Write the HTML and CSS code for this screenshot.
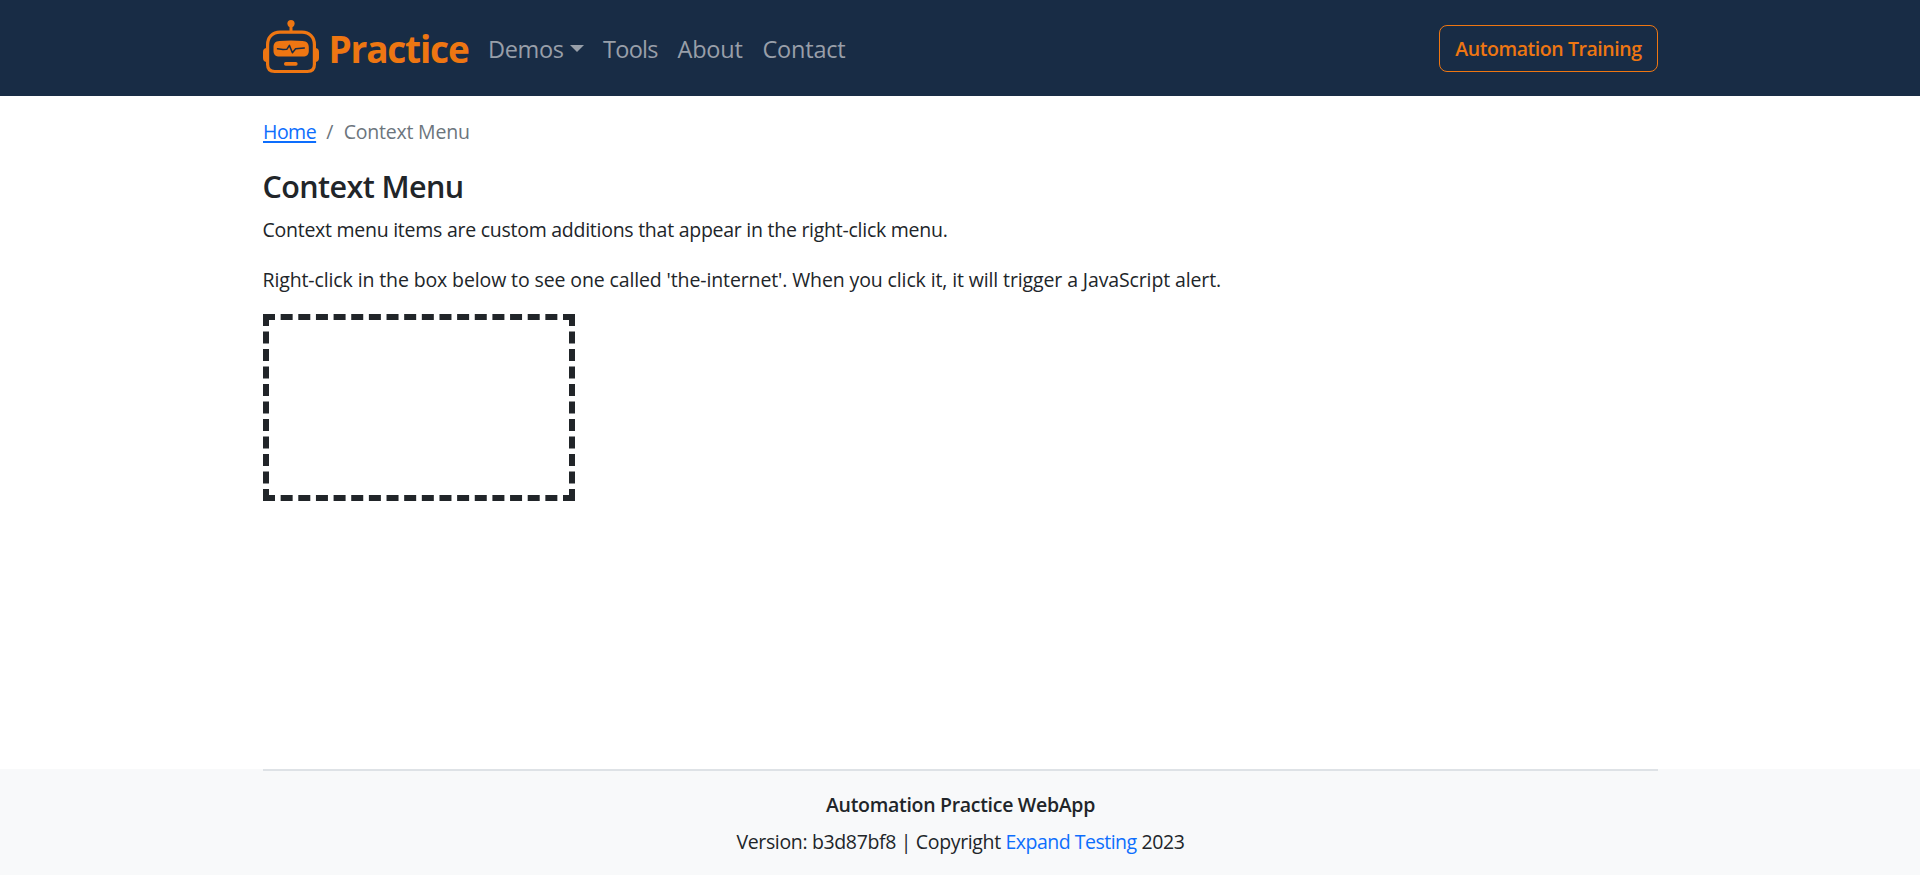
FILE: index.html
```html
<!DOCTYPE html>
<html lang="en">
<head>
<meta charset="utf-8">
<title>Context Menu</title>
<link rel="stylesheet" href="styles.css">
</head>
<body>
<header class="navbar">
  <div class="container navbar-inner">
    <a class="brand" href="#">
      <svg class="brand-icon" viewBox="0 0 56 54" width="56" height="54" fill="none">
        <circle cx="28" cy="3.6" r="3.6" fill="#ee7612"/>
        <path d="M28 5v7" stroke="#ee7612" stroke-width="3"/>
        <path d="M17 12.2h22c7.500 0 12.400 5 12.400 12.400V44.500c0 4.600-2.400 7-7 7H11.600c-4.600 0-7-2.400-7-7V24.600C4.600 17.200 9.500 12.200 17 12.200z" stroke="#ee7612" stroke-width="3.200"/>
        <path d="M4 28C1.400 28 0 29.400 0 32v6c0 2.600 1.400 4 4 4zM52 28c2.600 0 4 1.400 4 4v6c0 2.600-1.400 4-4 4z" fill="#ee7612"/>
        <path d="M16.500 21c7.500-.7 15.500-.7 23 0 4.300.4 6.300 2.300 6.300 6.500v3.200c0 4-2 5.800-6 5.800H16.500c-4 0-6-1.800-6-5.800v-3.200c0-4.200 1.700-6.100 6-6.500z" fill="#ee7612"/>
        <path d="M14.500 28.800l5.500.7 4-.3 2.400-3.800 3 7.400 3.200-4 8.700-.7" stroke="#182c45" stroke-width="1.500" stroke-linejoin="round" stroke-linecap="round"/>
        <rect x="21" y="42" width="13.600" height="3.700" rx="1.700" fill="#ee7612"/>
      </svg>
      <span class="brand-name">Practice</span>
    </a>
    <nav class="links">
      <a class="link demos" href="#">Demos<span class="caret"></span></a>
      <a class="link tools" href="#">Tools</a>
      <a class="link about" href="#">About</a>
      <a class="link contact" href="#">Contact</a>
    </nav>
    <a class="training" href="#">Automation Training</a>
  </div>
</header>
<main class="container main">
  <nav class="breadcrumb">
    <a class="crumb-home" href="#">Home</a><span class="slash">/</span><span class="crumb-current">Context Menu</span>
  </nav>
  <h1 class="title">Context Menu</h1>
  <p class="text intro">Context menu items are custom additions that appear in the right-click menu.</p>
  <p class="text hint">Right-click in the box below to see one called 'the-internet'. When you click it, it will trigger a JavaScript alert.</p>
  <div class="hot-spot"></div>
</main>
<footer class="footer">
  <div class="container footer-inner">
    <div class="footer-title">Automation Practice WebApp</div>
    <div class="footer-text">Version: b3d87bf8 | Copyright <a class="footer-link" href="#">Expand Testing</a> 2023</div>
  </div>
</footer>
</body>
</html>
```
FILE: styles.css
```css
* { box-sizing: border-box; }
body {
  margin: 0;
  height: 875px;
  display: flex;
  flex-direction: column;
  background: #fff;
  color: #212529;
  font: 19.5px/30px "Open Sans", "Noto Sans", sans-serif;
  white-space: nowrap;
}
.container { width: 1395px; margin: 0 262px 0 263px; }
.navbar { height: 96px; flex: none; background: #182c45; }
.navbar-inner { height: 96px; display: flex; align-items: center; }
.brand { display: flex; align-items: center; color: #ee7612; text-decoration: none; }
.brand-icon { display: block; margin-top: -3px; }
.brand-name {
  width: 160px;
  padding: 2px 0 0 9.500px;
  font-size: 37px;
  line-height: 50px;
  font-weight: 700;
  letter-spacing: -1.200px;
}
.links { display: flex; margin-left: 9px; padding-top: 2px; }
.link {
  color: #989fa9;
  font-size: 23.500px;
  line-height: 36px;
  letter-spacing: -.2px;
  text-decoration: none;
}
.demos { width: 115px; letter-spacing: -.35px; }
.tools { width: 74.500px; letter-spacing: -.7px; }
.about { width: 85px; }
.caret {
  display: inline-block;
  margin-left: 6px;
  vertical-align: 6px;
  border-top: 7px solid;
  border-left: 7px solid transparent;
  border-right: 7px solid transparent;
}
.training {
  margin-left: auto;
  width: 219px;
  height: 47px;
  border: 1px solid #ee7612;
  border-radius: 8px;
  color: #ee7612;
  font-weight: 600;
  line-height: 46px;
  letter-spacing: -.43px;
  text-align: center;
  text-decoration: none;
}
.main { flex: 1; padding-top: 21px; }
.breadcrumb { display: flex; margin-bottom: 20px; color: #6c757d; }
.crumb-home {
  color: #0d6efd;
  letter-spacing: -.5px;
  text-decoration: underline;
  text-decoration-thickness: 2px;
  text-underline-offset: 2px;
}
.slash { width: 27.500px; text-align: center; }
.crumb-current { letter-spacing: -.2px; }
.title {
  margin: 0 0 10px;
  font-size: 30.500px;
  line-height: 38px;
  font-weight: 600;
  letter-spacing: -.6px;
  text-indent: -.5px;
}
.text { margin: 0 0 20px; text-indent: -.5px; }
.intro { letter-spacing: -.26px; }
.hint { margin-bottom: 19px; letter-spacing: -.12px; }
.hot-spot { width: 312px; height: 187px; border: 6px dashed #212529; }
.footer { height: 106px; flex: none; background: #f8f9fa; }
.footer-inner { border-top: 2px solid #dee2e6; padding-top: 19px; text-align: center; }
.footer-title { margin-bottom: 7px; font-weight: 600; letter-spacing: -.3px; }
.footer-text { letter-spacing: -.35px; }
.footer-link { color: #0d6efd; letter-spacing: -.5px; text-decoration: none; }
```
